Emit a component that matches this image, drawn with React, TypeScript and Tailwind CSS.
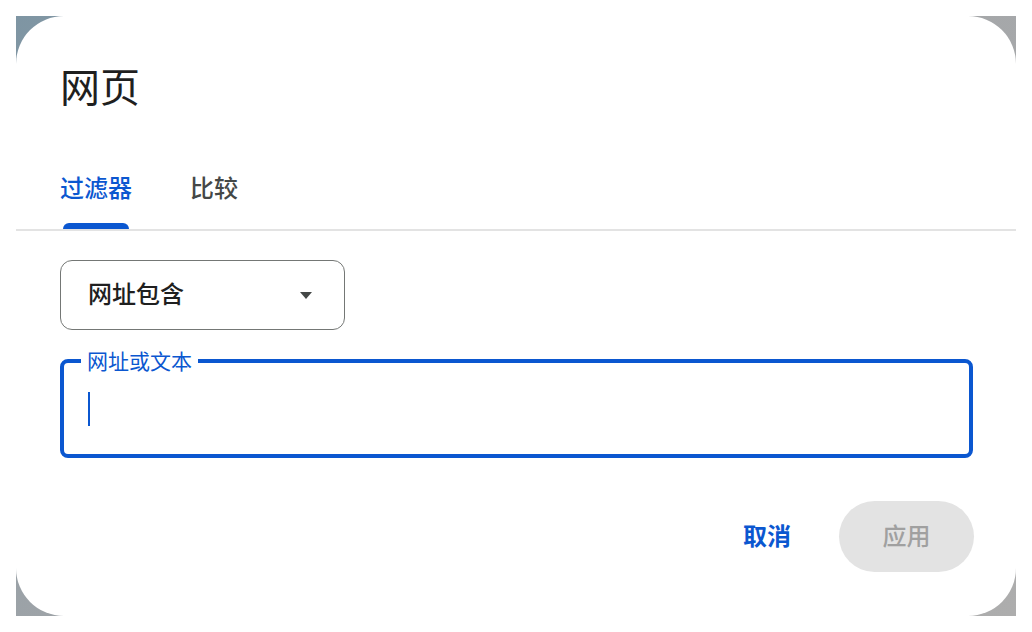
const font = "font-['Roboto','Noto_Sans_CJK_SC',sans-serif]"

function Tabs() {
  return (
    <div className="border-b-2 border-[#e3e3e3]">
      <div className="flex gap-[58px] pl-[44px] pt-[60px]">
        <div className="flex flex-col">
          <span className="text-[24px] leading-[32px] font-medium text-[#0b57d0]">过滤器</span>
          <div className="mt-[18px] mx-[3px] h-[6px] rounded-t-[6px] bg-[#0b57d0]" />
        </div>
        <div className="flex flex-col">
          <span className="text-[24px] leading-[32px] font-medium text-[#444746]">比较</span>
        </div>
      </div>
    </div>
  )
}

export default function App() {
  return (
    <div className={`w-[1032px] h-[632px] bg-white p-4 ${font}`}>
      <div className="w-[1000px] h-[600px] bg-[linear-gradient(135deg,#7e95a3,#a2a5a8_45%,#adadad)]">
        <div className="w-full h-full rounded-[48px] bg-white flex flex-col">
          {/* Title */}
          <h1 className="pl-[44px] pt-[49px] text-[40px] leading-[48px] font-normal text-[#1f1f1f]">网页</h1>

          <Tabs />

          <div className="flex flex-col px-[44px] pt-[29px]">
            {/* Select */}
            <div className="w-[285px] h-[70px] rounded-[12px] border-[1.5px] border-[#747775] flex items-center justify-between pl-[27px] pr-[32px]">
              <span className="text-[24px] font-medium text-[#1f1f1f]">网址包含</span>
              <svg width="12" height="7" viewBox="0 0 12 7">
                <path d="M0 0h12L6 7z" fill="#444746" />
              </svg>
            </div>

            {/* Input */}
            <div className="relative mt-[29px] w-[913px] h-[99px] rounded-[8px] border-[4px] border-[#0b57d0] flex items-center pl-[24px]">
              <span className="absolute left-[17px] top-[-1px] -translate-y-1/2 bg-white px-[6px] text-[21px] leading-[24px] text-[#0b57d0]">网址或文本</span>
              <div className="w-[2px] h-[34px] bg-[#0b57d0]" />
            </div>

            {/* Actions */}
            <div className="flex justify-end items-center mt-[43px] gap-[24px] mr-[-2px]">
              <button className="px-[24px] h-[71px] text-[24px] font-bold text-[#0b57d0]">取消</button>
              <button className="w-[135px] h-[71px] rounded-full bg-[#e3e3e3] text-[24px] font-medium text-[#a0a0a0]">应用</button>
            </div>
          </div>
        </div>
      </div>
    </div>
  )
}
